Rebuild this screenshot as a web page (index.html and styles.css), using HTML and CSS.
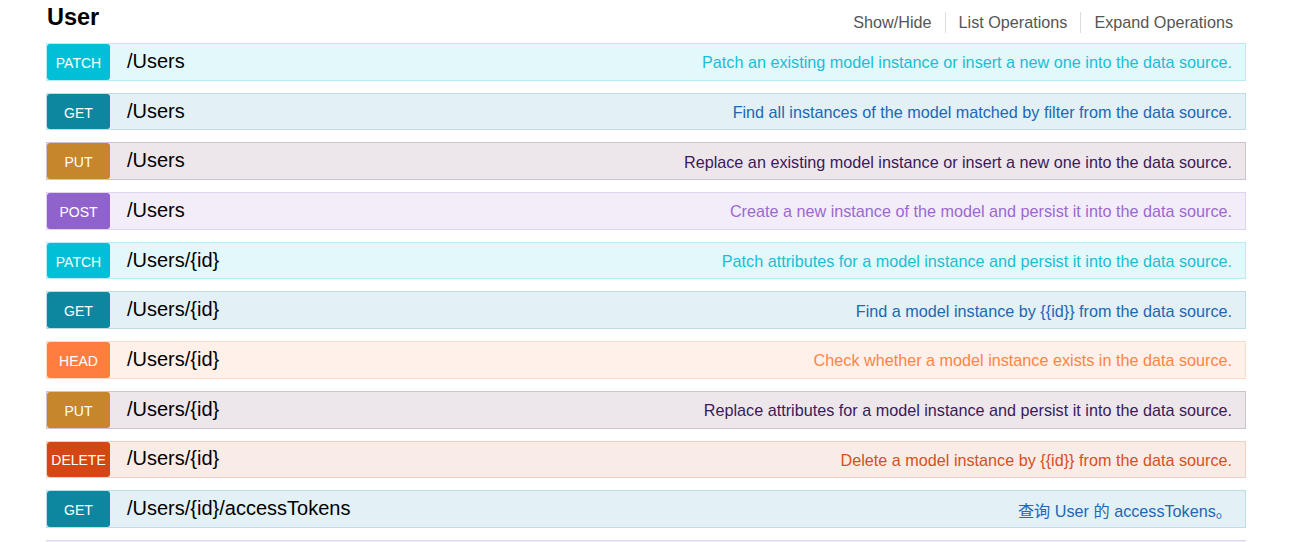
FILE: index.html
```html
<!DOCTYPE html>
<html lang="en">
<head>
<meta charset="utf-8">
<title>User</title>
<link rel="stylesheet" href="styles.css">
</head>
<body>
<div class="resource">
  <div class="resource-head">
    <h2 class="resource-title">User</h2>
    <ul class="options">
      <li><a href="#">Show/Hide</a></li>
      <li><a href="#">List Operations</a></li>
      <li><a href="#">Expand Operations</a></li>
    </ul>
  </div>
  <ul class="operations">
    <li class="op patch"><span class="method">PATCH</span><span class="path">/Users</span><span class="desc">Patch an existing model instance or insert a new one into the data source.</span></li>
    <li class="op get"><span class="method">GET</span><span class="path">/Users</span><span class="desc">Find all instances of the model matched by filter from the data source.</span></li>
    <li class="op put"><span class="method">PUT</span><span class="path">/Users</span><span class="desc">Replace an existing model instance or insert a new one into the data source.</span></li>
    <li class="op post"><span class="method">POST</span><span class="path">/Users</span><span class="desc">Create a new instance of the model and persist it into the data source.</span></li>
    <li class="op patch"><span class="method">PATCH</span><span class="path">/Users/{id}</span><span class="desc">Patch attributes for a model instance and persist it into the data source.</span></li>
    <li class="op get"><span class="method">GET</span><span class="path">/Users/{id}</span><span class="desc">Find a model instance by {{id}} from the data source.</span></li>
    <li class="op head"><span class="method">HEAD</span><span class="path">/Users/{id}</span><span class="desc">Check whether a model instance exists in the data source.</span></li>
    <li class="op put"><span class="method">PUT</span><span class="path">/Users/{id}</span><span class="desc">Replace attributes for a model instance and persist it into the data source.</span></li>
    <li class="op delete"><span class="method">DELETE</span><span class="path">/Users/{id}</span><span class="desc">Delete a model instance by {{id}} from the data source.</span></li>
    <li class="op get"><span class="method">GET</span><span class="path">/Users/{id}/accessTokens</span><span class="desc">查询 User 的 accessTokens。</span></li>
    <li class="op-next post"></li>
  </ul>
</div>
</body>
</html>
```
FILE: styles.css
```css
html, body {
  margin: 0;
  padding: 0;
  background: #ffffff;
}

body {
  font-family: "Liberation Sans", Arial, "Noto Sans CJK SC", sans-serif;
  color: #000;
}

.resource {
  width: 1200px;
  margin-left: 46px;
}

.resource-head {
  display: flex;
  align-items: flex-start;
  justify-content: space-between;
  height: 43px;
}

.resource-title {
  margin: 3px 0 0 1px;
  font-size: 23.5px;
  line-height: 28px;
  font-weight: bold;
}

.options {
  list-style: none;
  margin: 12px 0 0 0;
  padding: 0;
  display: flex;
}

.options li {
  padding: 0 13px 0 13px;
  border-left: 1px solid #dddddd;
  line-height: 21px;
}

.options li:first-child {
  border-left: none;
}

.options a {
  color: #555555;
  text-decoration: none;
  font-size: 16.2px;
}

.operations {
  list-style: none;
  margin: 0;
  padding: 0;
}

.op {
  box-sizing: border-box;
  height: 37.7px;
  margin-bottom: 12px;
  border: 1px solid;
  display: flex;
  align-items: center;
}

.op-next {
  height: 3px;
  border-top: 1px solid;
}

.method {
  box-sizing: border-box;
  width: 63px;
  height: 100%;
  flex: none;
  border-radius: 3px;
  color: #ffffff;
  font-size: 14px;
  display: flex;
  align-items: center;
  justify-content: center;
  padding-top: 2px;
}

.path {
  margin-left: 17px;
  font-size: 20px;
  color: #000;
  flex: none;
  padding-bottom: 1px;
}

.desc {
  margin-left: auto;
  margin-right: 13px;
  font-size: 16.2px;
  padding-top: 2px;
}

.patch { background: #e3f8fb; border-color: #b8edf3; }
.patch .method { background: #00bfd6; }
.patch .desc { color: #19bed4; }

.get { background: #e3f0f5; border-color: #c0dde6; }
.get .method { background: #0d87a0; }
.get .desc { color: #2068b4; }

.put { background: #ede7ec; border-color: #cdc2d2; }
.put .method { background: #c6862c; }
.put .desc { color: #3a1a59; }

.post { background: #f3edf9; border-color: #e0d2f1; }
.post .method { background: #9063cc; }
.post .desc { color: #9a69d0; }

.head { background: #fff0e9; border-color: #ffdac8; }
.head .method { background: #ff7e3f; }
.head .desc { color: #ff8446; }

.delete { background: #f9ece6; border-color: #f1d0c4; }
.delete .method { background: #d44714; }
.delete .desc { color: #d6501e; }
```
